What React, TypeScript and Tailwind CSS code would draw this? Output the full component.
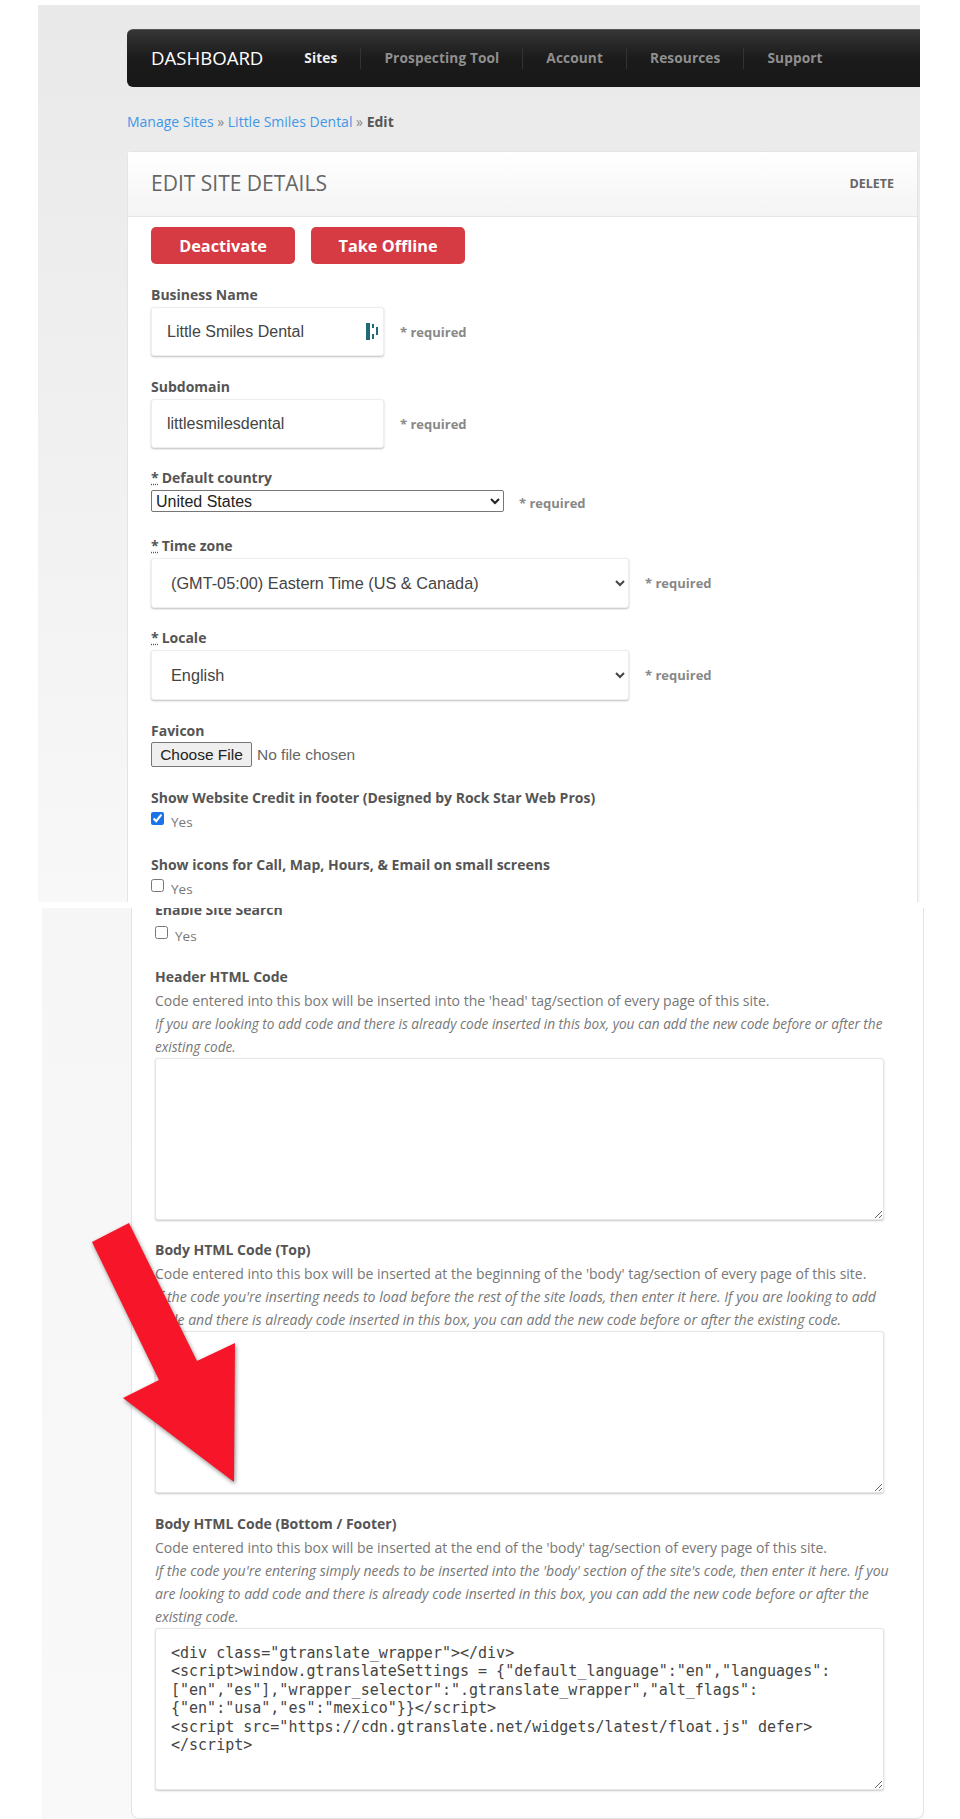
import { ReactNode } from 'react'

const NAV_ITEMS = ['Sites', 'Prospecting Tool', 'Account', 'Resources', 'Support']

const SANS = 'font-["Open_Sans",sans-serif]'
const ARIAL = 'font-["Liberation_Sans",Arial,sans-serif]'

function Label({ children, className = '' }: { children: ReactNode; className?: string }) {
  return <label className={`block h-[18px] text-[14px] leading-[18px] font-bold whitespace-nowrap text-[#555] ${className}`}>{children}</label>
}

function Required({ className = '' }: { className?: string }) {
  return <span className={`text-[13px] leading-[16px] font-bold text-[#888] ${className}`}>* required</span>
}

function Star() {
  return <abbr className="mr-[3px] underline decoration-dotted">*</abbr>
}

function CheckRow({ checked = false, className = '' }: { checked?: boolean; className?: string }) {
  return (
    <div className={`flex h-[18px] items-start gap-[7px] ${className}`}>
      <input type="checkbox" defaultChecked={checked} className="m-0 h-[13px] w-[13px] accent-[#1a73e8]" />
      <span className="mt-[1px] text-[13.5px] leading-[18px] text-[#777]">Yes</span>
    </div>
  )
}

function TextField({ value, icon = false, className = '' }: { value: string; icon?: boolean; className?: string }) {
  return (
    <div className={`flex items-center ${className}`}>
      <div className="relative">
        <input
          type="text"
          defaultValue={value}
          className={`${ARIAL} h-[49px] w-[233px] rounded-[3px] border border-[#eee] bg-white px-[15px] text-[16px] text-[#444] shadow-[0_1px_2px_rgba(0,0,0,0.25)]`}
        />
        {icon && (
          <svg className="absolute top-[16px] right-[6px]" width="12" height="17" viewBox="0 0 12 17" fill="#1f6a78">
            <rect x="0" y="0" width="4" height="17" />
            <rect x="6" y="1" width="2" height="4" />
            <rect x="6" y="11" width="2" height="5" />
            <rect x="10" y="4" width="2" height="8" />
          </svg>
        )}
      </div>
      <Required className="ml-[16px]" />
    </div>
  )
}

function BigSelect({ value, className = '' }: { value: string; className?: string }) {
  return (
    <div className={`flex items-center ${className}`}>
      <select
        defaultValue={value}
        className={`${ARIAL} h-[50px] w-[478px] rounded-[3px] border border-[#eee] bg-white pl-[15px] text-[16.3px] text-[#444] shadow-[0_1px_2px_rgba(0,0,0,0.25)]`}
      >
        <option>{value}</option>
      </select>
      <Required className="ml-[16px]" />
    </div>
  )
}

type TCodeBlockProps = {
  title: string
  line: string
  hint: string
  hintSize: string
  value?: string
  className?: string
}

function CodeBlock({ title, line, hint, hintSize, value, className = '' }: TCodeBlockProps) {
  return (
    <div className={className}>
      <Label>{title}</Label>
      <p className="mt-[3px] w-[735px] text-[14px] leading-[23px] text-[#777]">
        {line}
        <br />
        <em className={hintSize}>{hint}</em>
      </p>
      <textarea
        defaultValue={value}
        className='block h-[162px] w-[729px] rounded-[3px] border border-[#e6e6e6] bg-white p-[15px] font-["DejaVu_Sans_Mono",monospace] text-[15px] leading-[18.4px] text-[#444] shadow-[0_1px_2px_rgba(0,0,0,0.22)]'
      />
    </div>
  )
}

const FOOTER_CODE = `<div class="gtranslate_wrapper"></div>
<script>window.gtranslateSettings = {"default_language":"en","languages":["en","es"],"wrapper_selector":".gtranslate_wrapper","alt_flags":{"en":"usa","es":"mexico"}}</script>
<script src="https://cdn.gtranslate.net/widgets/latest/float.js" defer></script>`

export default function App() {
  return (
    <div className={`${SANS} relative flow-root h-[1819px] w-[960px] overflow-hidden bg-white`}>
      {/* first screenshot */}
      <section className="mt-[5px] ml-[38px] h-[897px] w-[882px] overflow-hidden bg-linear-to-b from-[#e9e9e9] to-[#f8f8f8] pt-[24px] pl-[89px]">
        <nav className="flex h-[58px] items-center rounded-l-[6px] border-t border-[#555] bg-linear-to-b from-[#363636] via-[#1b1b1b] to-[#171717] pl-[24px]">
          <span className="mr-[18px] -mt-[2px] text-[18.6px] text-white">DASHBOARD</span>
          {NAV_ITEMS.map((item, index) => (
            <a
              key={item}
              className={`flex h-[21px] items-center px-[23px] text-[13.7px] font-bold tracking-[0.1px] ${index === 0 ? 'text-[#eee]' : 'text-[#8f8f8f]'} ${index < NAV_ITEMS.length - 1 ? 'border-r border-[#333]' : ''}`}
            >
              {item}
            </a>
          ))}
        </nav>

        <div className="mt-[25px] h-[20px] text-[14px] leading-[20px] text-[#888]">
          <a className="text-[#3f97e8]">Manage Sites</a> » <a className="text-[#3f97e8]">Little Smiles Dental</a> » <b className="text-[#555]">Edit</b>
        </div>

        <div className="mt-[19px] h-[760px] w-[791px] rounded-t-[5px] border border-[#e4e4e4] bg-white">
          <header className="flex h-[65px] items-center justify-between border-b border-[#e6e6e6] bg-linear-to-b from-white to-[#f4f4f4] px-[23px]">
            <h1 className="text-[21px] font-normal text-[#666]">EDIT SITE DETAILS</h1>
            <a className="text-[12.5px] font-bold text-[#666]">DELETE</a>
          </header>

          <div className="pl-[23px]">
            <div className="mt-[10px] flex gap-[16px]">
              <button className="h-[37px] w-[144px] rounded-[5px] bg-[#d63a43] pt-[1px] text-[16.3px] font-bold text-white">Deactivate</button>
              <button className="h-[37px] w-[154px] rounded-[5px] bg-[#d63a43] pt-[1px] text-[16.3px] font-bold text-white">Take Offline</button>
            </div>

            <Label className="mt-[22px]">Business Name</Label>
            <TextField value="Little Smiles Dental" icon className="mt-[3px]" />

            <Label className="mt-[22px]">Subdomain</Label>
            <TextField value="littlesmilesdental" className="mt-[3px]" />

            <Label className="mt-[21px]"><Star />Default country</Label>
            <div className="mt-[3px] flex items-center">
              <select defaultValue="United States" className={`${ARIAL} h-[22px] w-[353px] rounded-[2px] border border-[#767676] bg-white text-[16px] leading-[18px] text-[#222]`}>
                <option>United States</option>
              </select>
              <Required className="mt-[3px] ml-[15px]" />
            </div>

            <Label className="mt-[25px]"><Star />Time zone</Label>
            <BigSelect value="(GMT-05:00) Eastern Time (US & Canada)" className="mt-[3px]" />

            <Label className="mt-[21px]"><Star />Locale</Label>
            <BigSelect value="English" className="mt-[3px]" />

            <Label className="mt-[22px]">Favicon</Label>
            <div className={`${ARIAL} mt-[2px] flex h-[25px] items-center text-[15.5px]`}>
              <button className="h-[25px] w-[101px] rounded-[2px] border border-[#767676] bg-[#efefef] text-[#222]">Choose File</button>
              <span className="ml-[5px] text-[#666]">No file chosen</span>
            </div>

            <Label className="mt-[22px]">Show Website Credit in footer (Designed by Rock Star Web Pros)</Label>
            <CheckRow checked className="mt-[5px]" />

            <Label className="mt-[26px]">Show icons for Call, Map, Hours, & Email on small screens</Label>
            <CheckRow className="mt-[5px]" />
          </div>
        </div>
      </section>

      {/* second screenshot, its first label is cut off */}
      <section className="mt-[6px] ml-[42px] h-[911px] w-[882px] overflow-hidden bg-linear-to-b from-[#f6f6f6] to-[#f9f9f9] pl-[89px]">
        <div className="flow-root h-[911px] rounded-b-[8px] border-x border-b border-[#e4e4e4] bg-white pl-[23px]">
          <Label className="-mt-[7px]">Enable Site Search</Label>
          <CheckRow className="mt-[7px]" />

          <CodeBlock
            className="mt-[24px]"
            title="Header HTML Code"
            line="Code entered into this box will be inserted into the 'head' tag/section of every page of this site."
            hint="If you are looking to add code and there is already code inserted in this box, you can add the new code before or after the existing code."
            hintSize="text-[13.6px]"
          />
          <CodeBlock
            className="mt-[21px]"
            title="Body HTML Code (Top)"
            line="Code entered into this box will be inserted at the beginning of the 'body' tag/section of every page of this site."
            hint="If the code you're inserting needs to load before the rest of the site loads, then enter it here. If you are looking to add code and there is already code inserted in this box, you can add the new code before or after the existing code."
            hintSize="text-[14.1px]"
          />
          <CodeBlock
            className="mt-[22px]"
            title="Body HTML Code (Bottom / Footer)"
            line="Code entered into this box will be inserted at the end of the 'body' tag/section of every page of this site."
            hint="If the code you're entering simply needs to be inserted into the 'body' section of the site's code, then enter it here. If you are looking to add code and there is already code inserted in this box, you can add the new code before or after the existing code."
            hintSize="text-[14.05px]"
            value={FOOTER_CODE}
          />
        </div>
      </section>

      {/* annotation arrow pasted over the page */}
      <svg className="absolute top-0 left-0 drop-shadow-[1px_2px_2px_rgba(0,0,0,0.45)]" width="960" height="1819" fill="#f71629">
        <polygon points="129,1223 92,1242 159,1380 123,1398 234,1482 235,1343 197,1361" />
      </svg>
    </div>
  )
}
